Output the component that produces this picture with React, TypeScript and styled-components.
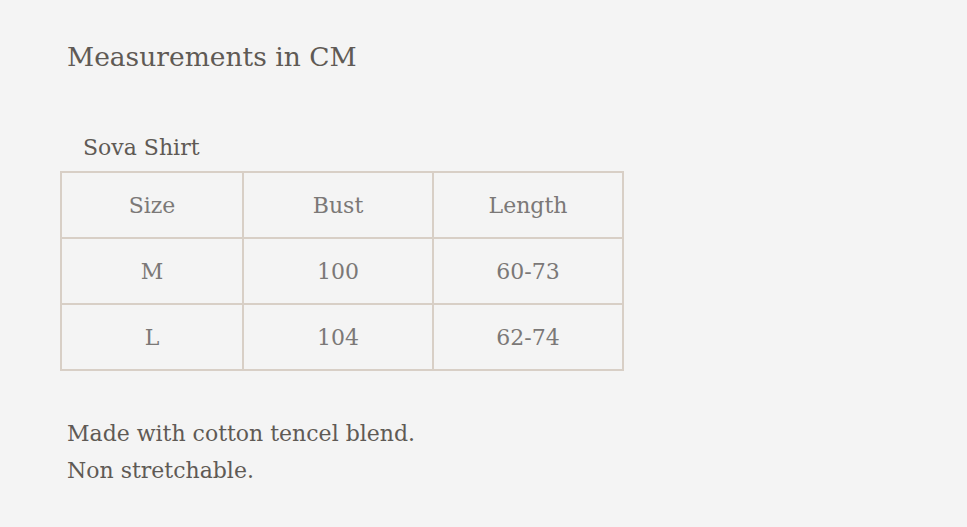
import React from "react";
import styled, { createGlobalStyle } from "styled-components";

const GlobalStyle = createGlobalStyle`
  html, body {
    margin: 0;
    padding: 0;
    background: #f4f4f4;
  }
  body {
    font-family: "DejaVu Serif", "Liberation Serif", serif;
    color: #5f5a55;
  }
`;

const Page = styled.div`
  width: 967px;
  height: 527px;
  box-sizing: border-box;
  padding: 38px 0 0 60px;
`;

const Heading = styled.h2`
  margin: 0 0 0 7px;
  font-size: 26.5px;
  font-weight: 400;
  line-height: 38px;
  color: #5f5a55;
`;

const Caption = styled.div`
  margin: 57px 0 0 23px;
  font-size: 22px;
  line-height: 30px;
  color: #5f5a55;
`;

const Table = styled.table`
  margin-top: 8px;
  border-collapse: collapse;
  border: 2px solid #d8cfc6;
`;

const Cell = styled.td<{ width: number }>`
  width: ${(p) => p.width}px;
  height: 64px;
  padding: 0;
  border: 2px solid #d8cfc6;
  text-align: center;
  vertical-align: middle;
  font-size: 22px;
  color: #7b7877;
`;

const Note = styled.p`
  margin: 44px 0 0 7px;
  font-size: 22px;
  line-height: 37px;
  color: #5f5a55;
`;

const widths = [180, 188, 188];
const rows = [
  ["Size", "Bust", "Length"],
  ["M", "100", "60-73"],
  ["L", "104", "62-74"],
];

export default function App() {
  return (
    <>
      <GlobalStyle />
      <Page>
        <Heading>Measurements in CM</Heading>
        <Caption>Sova Shirt</Caption>
        <Table>
          <tbody>
            {rows.map((row, i) => (
              <tr key={i}>
                {row.map((v, j) => (
                  <Cell key={j} width={widths[j]}>
                    {v}
                  </Cell>
                ))}
              </tr>
            ))}
          </tbody>
        </Table>
        <Note>
          Made with cotton tencel blend.
          <br />
          Non stretchable.
        </Note>
      </Page>
    </>
  );
}
